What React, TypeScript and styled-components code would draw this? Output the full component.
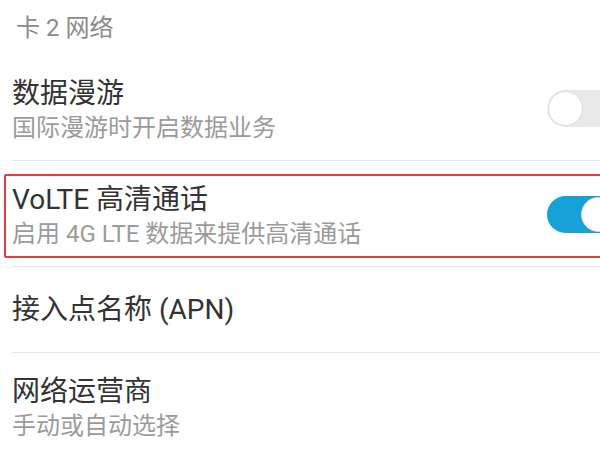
import React from "react";
import styled, { createGlobalStyle } from "styled-components";

const Global = createGlobalStyle`
  html, body { margin: 0; padding: 0; background: #ffffff; }
  body { width: 600px; height: 451px; overflow: hidden; font-family: Roboto, "Noto Sans CJK SC", sans-serif; }
`;

const Page = styled.div`
  width: 600px;
  height: 451px;
  overflow: hidden;
  background: #fff;
`;

const Header = styled.div`
  height: 55px;
  padding-left: 16px;
  display: flex;
  align-items: center;
  font-size: 24px;
  color: #8a8a8a;
  box-sizing: border-box;
  padding-bottom: 4px;
`;

const Row = styled.div<{ $single?: boolean; $last?: boolean }>`
  position: relative;
  display: flex;
  align-items: center;
  height: ${(p) => (p.$single ? 86 : 106)}px;
  padding-left: 12px;
  box-sizing: border-box;
  &::after {
    content: "";
    position: absolute;
    left: 12px;
    right: 0;
    bottom: 0;
    height: 1px;
    background: ${(p) => (p.$last ? "transparent" : "#e6e6e6")};
  }
`;

const TextCol = styled.div`
  flex: 1;
  display: flex;
  flex-direction: column;
`;

const Title = styled.div`
  font-size: 28px;
  line-height: 40px;
  color: #333333;
`;

const Sub = styled.div`
  font-size: 24px;
  line-height: 28px;
  color: #9b9b9b;
`;

const Track = styled.div<{ $on?: boolean }>`
  width: 70px;
  height: 37px;
  border-radius: 19px;
  margin-right: -17px;
  background: ${(p) => (p.$on ? "#16a2d9" : "#e9e9e9")};
  display: flex;
  align-items: center;
  justify-content: ${(p) => (p.$on ? "flex-end" : "flex-start")};
  padding: 0 1px;
  box-sizing: border-box;
`;

const Thumb = styled.div`
  width: 35px;
  height: 35px;
  border-radius: 50%;
  background: #fff;
  box-sizing: border-box;
  border: 1px solid #dcdcdc;
`;

const Highlight = styled.div`
  position: absolute;
  left: 4px;
  right: -10px;
  top: 13px;
  bottom: 9px;
  border: 2px solid #e23c3c;
  border-radius: 2px;
  pointer-events: none;
`;

type Item = { title: string; sub?: string; toggle?: "on" | "off"; mark?: boolean };

const items: Item[] = [
  { title: "数据漫游", sub: "国际漫游时开启数据业务", toggle: "off" },
  { title: "VoLTE 高清通话", sub: "启用 4G LTE 数据来提供高清通话", toggle: "on", mark: true },
  { title: "接入点名称 (APN)" },
  { title: "网络运营商", sub: "手动或自动选择" },
];

export default function App() {
  return (
    <Page>
      <Global />
      <Header>卡 2 网络</Header>
      {items.map((it, i) => (
        <Row key={i} $single={!it.sub} $last={i === items.length - 1}>
          <TextCol>
            <Title>{it.title}</Title>
            {it.sub && <Sub>{it.sub}</Sub>}
          </TextCol>
          {it.toggle && (
            <Track $on={it.toggle === "on"}>
              <Thumb />
            </Track>
          )}
          {it.mark && <Highlight />}
        </Row>
      ))}
    </Page>
  );
}
